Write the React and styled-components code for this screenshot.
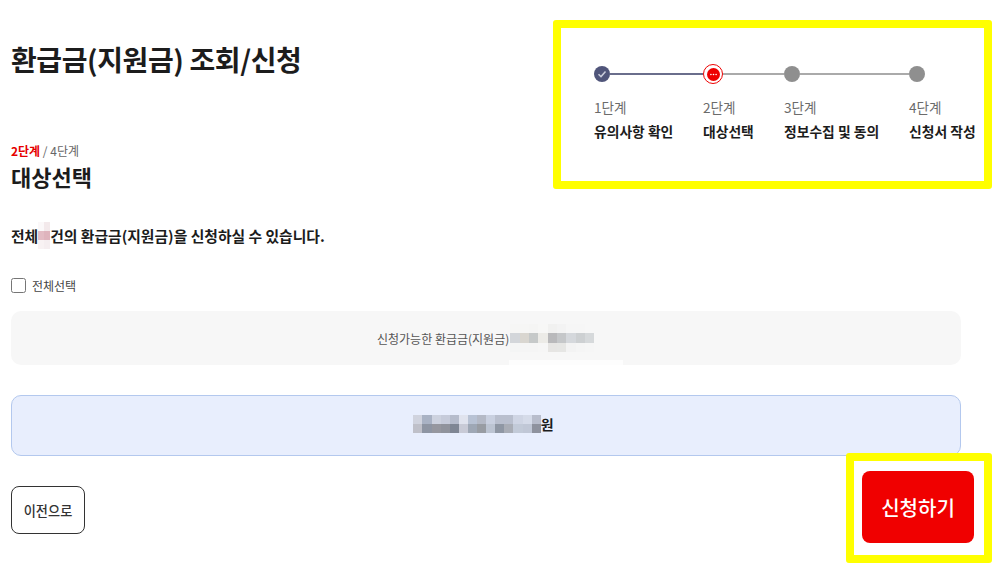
import React from 'react'
import styled, { createGlobalStyle } from 'styled-components'

const STEPS = [
  { label: '1단계', name: '유의사항 확인', state: 'done', width: 109 },
  { label: '2단계', name: '대상선택', state: 'active', width: 81 },
  { label: '3단계', name: '정보수집 및 동의', state: 'todo', width: 125 },
  { label: '4단계', name: '신청서 작성', state: 'todo', width: 66 },
]

const INLINE_MOSAIC = [
  ['#fbf8f9', '#f3e9eb'],
  ['#e3bcc4', '#dfb4bd'],
  ['#f8f2f3', '#f5eef0'],
]

const PANEL_MOSAIC = [
  ['#f6f6f5', '#f6f6f5', '#f5f5f4', '#f7f7f6', '#f1f1f0', '#f3f3f3', '#f6f6f6', '#f6f6f6', '#f7f7f7'],
  ['#d3d6da', '#d9d6d0', '#c6c9c9', '#ecebe7', '#b9b9bb', '#c5c7c9', '#d5d8dc', '#cdd0d2', '#d6d9db'],
  ['#f4f5f5', '#f5f5f5', '#f5f5f5', '#f6f6f6', '#e6e5e3', '#e6e6e4', '#f3f3f3', '#f5f5f5', '#f6f6f6'],
]

const TOTAL_MOSAIC = [
  ['#d0d3de', '#a9b2c4', '#cdd2df', '#c6cbda', '#b6bccc', '#e0e3ee', '#b8c2d4', '#b4b9c6', '#c9d0e0', '#b9bfce', '#b9bfce', '#cfd5e4', '#d5dbe9', '#b8bdcc'],
  ['#bfc0c9', '#8e95a3', '#96979f', '#90939c', '#7f8694', '#c8cad6', '#9ea7b5', '#989ca3', '#bcc4d2', '#8f97a4', '#a9adb6', '#c2cad8', '#c0c7d6', '#8e929e'],
]

function Mosaic({ rows, cell, cellHeight }) {
  return (
    <MosaicGrid $cols={rows[0].length} $cell={cell} $cellHeight={cellHeight}>
      {rows.flat().map((color, i) => (
        <i key={i} style={{ background: color }} />
      ))}
    </MosaicGrid>
  )
}

function StepDot({ state }) {
  if (state === 'done') {
    return (
      <DoneDot>
        <svg width="10" height="10" viewBox="0 0 10 10" fill="none">
          <path d="M1.5 5.2 4 7.6 8.5 2.6" stroke="#c9ccdb" strokeWidth="1.5" />
        </svg>
      </DoneDot>
    )
  }
  if (state === 'active') {
    return (
      <ActiveDot>
        <svg width="13" height="13" viewBox="0 0 13 13">
          <circle cx="6.5" cy="6.5" r="6.5" fill="#ee0000" />
          <circle cx="3.9" cy="6.5" r="0.8" fill="#fff" />
          <circle cx="6.5" cy="6.5" r="0.8" fill="#fff" />
          <circle cx="9.1" cy="6.5" r="0.8" fill="#fff" />
        </svg>
      </ActiveDot>
    )
  }
  return <TodoDot />
}

export default function App() {
  return (
    <Page>
      <GlobalStyle />
      <TopRow>
        <Intro>
          <Title>환급금(지원금) 조회/신청</Title>
          <StepCount>
            <strong>2단계</strong> / 4단계
          </StepCount>
          <Heading>대상선택</Heading>
        </Intro>
        <StepperBox>
          <Stepper>
            {STEPS.map((step, i) => (
              <Step key={step.label} $width={step.width}>
                <DotRow>
                  <StepDot state={step.state} />
                  {i < STEPS.length - 1 && <Connector $done={step.state === 'done'} />}
                </DotRow>
                <StepLabel>{step.label}</StepLabel>
                <StepName>{step.name}</StepName>
              </Step>
            ))}
          </Stepper>
        </StepperBox>
      </TopRow>

      <Notice>
        전체
        <Mosaic rows={INLINE_MOSAIC} cell={6} cellHeight={9} />
        건의 환급금(지원금)을 신청하실 수 있습니다.
      </Notice>

      <CheckRow>
        <input type="checkbox" />
        전체선택
      </CheckRow>

      <RefundPanel>
        신청가능한 환급금(지원금)
        <Mosaic rows={PANEL_MOSAIC} cell={9.35} cellHeight={9.4} />
        <PanelPatch />
      </RefundPanel>

      <TotalPanel>
        <Mosaic rows={TOTAL_MOSAIC} cell={9.1} cellHeight={9} />
        원
      </TotalPanel>

      <ActionRow>
        <BackButton>이전으로</BackButton>
        <ApplyBox>
          <ApplyButton>신청하기</ApplyButton>
        </ApplyBox>
      </ActionRow>
    </Page>
  )
}

const GlobalStyle = createGlobalStyle`
  body {
    margin: 0;
    background: #fff;
    font-family: "Noto Sans CJK KR", "Noto Sans", sans-serif;
    color: #1c1c1c;
  }
`

const Page = styled.main`
  width: 998px;
  height: 570px;
  box-sizing: border-box;
  padding: 20px 6px 0 11px;
  overflow: hidden;
`

const TopRow = styled.div`
  display: flex;
  justify-content: space-between;
  align-items: flex-start;
`

const Intro = styled.div`
  display: flex;
  flex-direction: column;
`

const Title = styled.h1`
  margin: 19px 0 0;
  font-size: 28px;
  line-height: 40px;
  font-weight: 700;
  letter-spacing: -0.4px;
`

const StepCount = styled.div`
  margin-top: 63px;
  font-size: 12px;
  line-height: 18px;
  color: #666;

  strong {
    color: #e60000;
    font-weight: 700;
  }
`

const Heading = styled.h2`
  margin: -1px 0 0;
  font-size: 22px;
  line-height: 34px;
  font-weight: 700;
`

const StepperBox = styled.section`
  width: 439px;
  height: 169px;
  box-sizing: border-box;
  border: 8px solid #ffff00;
  border-radius: 3px;
  padding: 36px 0 0 33px;
`

const Stepper = styled.div`
  display: flex;
`

const Step = styled.div`
  width: ${(p) => p.$width}px;
  display: flex;
  flex-direction: column;
  white-space: nowrap;
`

const DotRow = styled.div`
  display: flex;
  align-items: center;
  height: 20px;
  margin-bottom: 13px;
`

const DoneDot = styled.span`
  flex: none;
  width: 16px;
  height: 16px;
  border-radius: 50%;
  background: #50557a;
  display: flex;
  align-items: center;
  justify-content: center;
`

const ActiveDot = styled.span`
  flex: none;
  width: 20px;
  height: 20px;
  box-sizing: border-box;
  border: 1.5px solid #ee0000;
  border-radius: 50%;
  background: #fff;
  display: flex;
  align-items: center;
  justify-content: center;
`

const TodoDot = styled.span`
  flex: none;
  width: 16px;
  height: 16px;
  border-radius: 50%;
  background: #8f8f8f;
`

const Connector = styled.span`
  flex: 1;
  height: 2px;
  background: ${(p) => (p.$done ? '#6a6e8c' : '#aaaaaa')};
`

const StepLabel = styled.span`
  font-size: 13.6px;
  line-height: 20px;
  color: #6b6b6b;
`

const StepName = styled.span`
  margin-top: 4px;
  font-size: 13.8px;
  line-height: 20px;
  font-weight: 700;
`

const MosaicGrid = styled.span`
  display: inline-grid;
  grid-template-columns: repeat(${(p) => p.$cols}, ${(p) => p.$cell}px);
  grid-auto-rows: ${(p) => p.$cellHeight}px;
  vertical-align: middle;

  i {
    display: block;
  }
`

const Notice = styled.p`
  margin: 29px 0 0;
  height: 27px;
  display: flex;
  align-items: center;
  font-size: 14.8px;
  font-weight: 700;
`

const CheckRow = styled.label`
  margin-top: 27px;
  display: flex;
  align-items: center;
  gap: 6px;
  height: 18px;
  font-size: 12px;
  color: #444;

  input {
    margin: 0;
    width: 15px;
    height: 15px;
  }
`

const RefundPanel = styled.div`
  position: relative;
  margin-top: 17px;
  width: 950px;
  height: 54px;
  box-sizing: border-box;
  padding-left: 366px;
  display: flex;
  align-items: center;
  gap: 1px;
  background: #f7f7f7;
  border-radius: 10px;
  font-size: 12px;
  color: #555;
`

const PanelPatch = styled.span`
  position: absolute;
  left: 498px;
  bottom: 0;
  width: 114px;
  height: 5px;
  background: #fdfdfd;
`

const TotalPanel = styled.div`
  margin-top: 30px;
  width: 950px;
  height: 61px;
  box-sizing: border-box;
  display: flex;
  align-items: center;
  justify-content: center;
  padding: 0 5px 3px 0;
  background: #e8eefd;
  border: 1px solid #b3c8ee;
  border-radius: 10px;
  font-size: 14px;
  font-weight: 700;
`

const ActionRow = styled.div`
  margin-top: -3px;
  display: flex;
  justify-content: space-between;
  align-items: flex-start;
`

const BackButton = styled.button`
  margin-top: 33px;
  width: 74px;
  height: 48px;
  padding: 0;
  background: #fff;
  border: 1px solid #333;
  border-radius: 8px;
  font-family: inherit;
  font-size: 13.2px;
  font-weight: 500;
  color: #333;
`

const ApplyBox = styled.div`
  position: relative;
  width: 146px;
  height: 110px;
  box-sizing: border-box;
  border: 8px solid #ffff00;
  border-radius: 3px;
  padding: 10px 0 0 8px;
`

const ApplyButton = styled.button`
  display: block;
  width: 112px;
  height: 72px;
  padding: 0;
  background: #f00000;
  border: 0;
  border-radius: 8px;
  font-family: inherit;
  font-size: 20px;
  font-weight: 500;
  color: #fff;
`
